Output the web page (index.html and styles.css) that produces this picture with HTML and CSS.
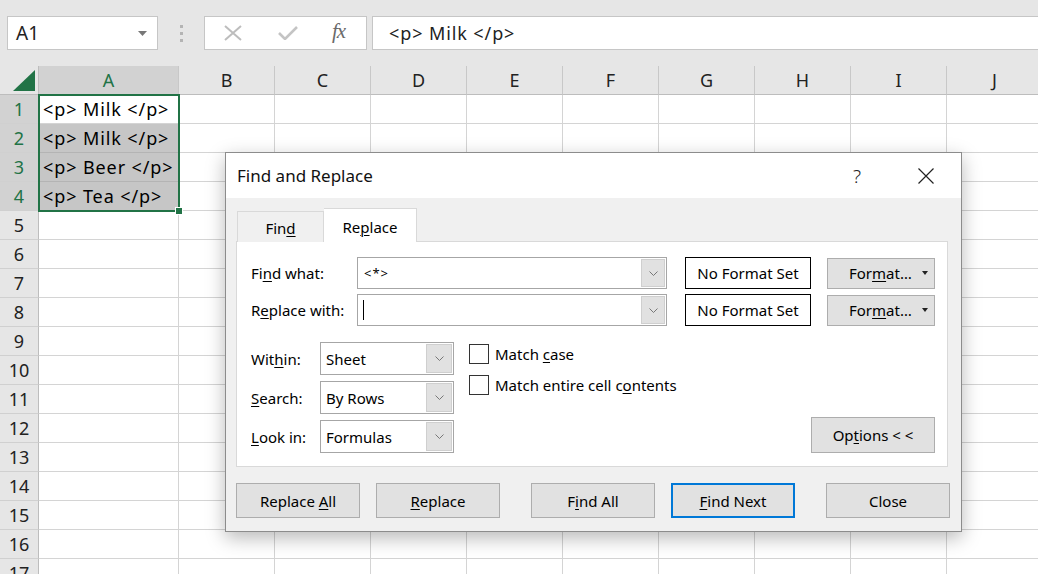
FILE: index.html
```html
<!DOCTYPE html>
<html>
<head>
<meta charset="utf-8">
<link rel="stylesheet" href="styles.css">
</head>
<body>
<div class="toolbar">
  <div class="namebox"><span>A1</span><svg width="9" height="5" viewBox="0 0 9 5"><path d="M0 0h9L4.5 5z" fill="#777"/></svg></div>
  <div class="grip"><i></i><i></i><i></i></div>
  <div class="fxbox">
    <svg class="fx-x" width="18" height="16" viewBox="0 0 18 16"><path d="M1 1l16 14M17 1L1 15" stroke="#bdbdbd" stroke-width="2" fill="none"/></svg>
    <svg class="fx-ok" width="20" height="14" viewBox="0 0 20 14"><path d="M1 7l6 6L19 1" stroke="#c4c4c4" stroke-width="2.6" fill="none"/></svg>
    <span class="fx-f">fx</span>
  </div>
  <div class="formula">&lt;p&gt; Milk &lt;/p&gt;</div>
</div>

<div class="sheet">
  <div class="row hdr">
    <div class="corner"><svg width="22" height="21" viewBox="0 0 22 21"><path d="M22 0V21H0z" fill="#217346"/></svg></div>
    <div class="ch a sel">A</div><div class="ch">B</div><div class="ch">C</div><div class="ch">D</div><div class="ch">E</div><div class="ch">F</div><div class="ch">G</div><div class="ch">H</div><div class="ch">I</div><div class="ch">J</div>
  </div>
  <div class="row"><div class="rh sel">1</div><div class="c a">&lt;p&gt; Milk &lt;/p&gt;</div><div class="c"></div><div class="c"></div><div class="c"></div><div class="c"></div><div class="c"></div><div class="c"></div><div class="c"></div><div class="c"></div><div class="c"></div></div>
  <div class="row"><div class="rh sel">2</div><div class="c a fill">&lt;p&gt; Milk &lt;/p&gt;</div><div class="c"></div><div class="c"></div><div class="c"></div><div class="c"></div><div class="c"></div><div class="c"></div><div class="c"></div><div class="c"></div><div class="c"></div></div>
  <div class="row"><div class="rh sel">3</div><div class="c a fill">&lt;p&gt; Beer &lt;/p&gt;</div><div class="c"></div><div class="c"></div><div class="c"></div><div class="c"></div><div class="c"></div><div class="c"></div><div class="c"></div><div class="c"></div><div class="c"></div></div>
  <div class="row"><div class="rh sel">4</div><div class="c a fill">&lt;p&gt; Tea &lt;/p&gt;</div><div class="c"></div><div class="c"></div><div class="c"></div><div class="c"></div><div class="c"></div><div class="c"></div><div class="c"></div><div class="c"></div><div class="c"></div></div>
  <div class="row"><div class="rh">5</div><div class="c a"></div><div class="c"></div><div class="c"></div><div class="c"></div><div class="c"></div><div class="c"></div><div class="c"></div><div class="c"></div><div class="c"></div><div class="c"></div></div>
  <div class="row"><div class="rh">6</div><div class="c a"></div><div class="c"></div><div class="c"></div><div class="c"></div><div class="c"></div><div class="c"></div><div class="c"></div><div class="c"></div><div class="c"></div><div class="c"></div></div>
  <div class="row"><div class="rh">7</div><div class="c a"></div><div class="c"></div><div class="c"></div><div class="c"></div><div class="c"></div><div class="c"></div><div class="c"></div><div class="c"></div><div class="c"></div><div class="c"></div></div>
  <div class="row"><div class="rh">8</div><div class="c a"></div><div class="c"></div><div class="c"></div><div class="c"></div><div class="c"></div><div class="c"></div><div class="c"></div><div class="c"></div><div class="c"></div><div class="c"></div></div>
  <div class="row"><div class="rh">9</div><div class="c a"></div><div class="c"></div><div class="c"></div><div class="c"></div><div class="c"></div><div class="c"></div><div class="c"></div><div class="c"></div><div class="c"></div><div class="c"></div></div>
  <div class="row"><div class="rh">10</div><div class="c a"></div><div class="c"></div><div class="c"></div><div class="c"></div><div class="c"></div><div class="c"></div><div class="c"></div><div class="c"></div><div class="c"></div><div class="c"></div></div>
  <div class="row"><div class="rh">11</div><div class="c a"></div><div class="c"></div><div class="c"></div><div class="c"></div><div class="c"></div><div class="c"></div><div class="c"></div><div class="c"></div><div class="c"></div><div class="c"></div></div>
  <div class="row"><div class="rh">12</div><div class="c a"></div><div class="c"></div><div class="c"></div><div class="c"></div><div class="c"></div><div class="c"></div><div class="c"></div><div class="c"></div><div class="c"></div><div class="c"></div></div>
  <div class="row"><div class="rh">13</div><div class="c a"></div><div class="c"></div><div class="c"></div><div class="c"></div><div class="c"></div><div class="c"></div><div class="c"></div><div class="c"></div><div class="c"></div><div class="c"></div></div>
  <div class="row"><div class="rh">14</div><div class="c a"></div><div class="c"></div><div class="c"></div><div class="c"></div><div class="c"></div><div class="c"></div><div class="c"></div><div class="c"></div><div class="c"></div><div class="c"></div></div>
  <div class="row"><div class="rh">15</div><div class="c a"></div><div class="c"></div><div class="c"></div><div class="c"></div><div class="c"></div><div class="c"></div><div class="c"></div><div class="c"></div><div class="c"></div><div class="c"></div></div>
  <div class="row"><div class="rh">16</div><div class="c a"></div><div class="c"></div><div class="c"></div><div class="c"></div><div class="c"></div><div class="c"></div><div class="c"></div><div class="c"></div><div class="c"></div><div class="c"></div></div>
  <div class="row"><div class="rh">17</div><div class="c a"></div><div class="c"></div><div class="c"></div><div class="c"></div><div class="c"></div><div class="c"></div><div class="c"></div><div class="c"></div><div class="c"></div><div class="c"></div></div>
</div>
<div class="selection"><div class="handle"></div></div>

<div class="dialog">
  <div class="titlebar">
    <span class="title">Find and Replace</span>
    <span class="help">?</span>
    <svg class="close-x" width="16" height="16" viewBox="0 0 16 16"><path d="M0.5 0.5l15 15M15.5 0.5l-15 15" stroke="#222" stroke-width="1.2" fill="none"/></svg>
  </div>
  <div class="dbody">
    <div class="tabs">
      <div class="tab">Fin<u>d</u></div>
      <div class="tab active">Re<u>p</u>lace</div>
    </div>
    <div class="panel">
      <div class="topgrid">
        <div class="lbl">Fi<u>n</u>d what:</div>
        <div class="combo wide"><span class="val find">&lt;*&gt;</span><span class="dd"><svg width="9" height="5" viewBox="0 0 9 5"><path d="M0.5 0.5l4 4 4-4" stroke="#777" fill="none"/></svg></span></div>
        <div class="nfs">No Format Set</div>
        <div class="btn fmt"><span>For<u>m</u>at&hellip;</span><svg width="6" height="4" viewBox="0 0 6 4"><path d="M0 0h6L3 4z" fill="#222"/></svg></div>
        <div class="lbl">R<u>e</u>place with:</div>
        <div class="combo wide"><span class="val"><span class="caret"></span></span><span class="dd"><svg width="9" height="5" viewBox="0 0 9 5"><path d="M0.5 0.5l4 4 4-4" stroke="#777" fill="none"/></svg></span></div>
        <div class="nfs">No Format Set</div>
        <div class="btn fmt"><span>For<u>m</u>at&hellip;</span><svg width="6" height="4" viewBox="0 0 6 4"><path d="M0 0h6L3 4z" fill="#222"/></svg></div>
      </div>
      <div class="lower">
        <div class="selgrid">
          <div class="lbl">Wit<u>h</u>in:</div>
          <div class="combo sm"><span class="val">Sheet</span><span class="dd"><svg width="9" height="5" viewBox="0 0 9 5"><path d="M0.5 0.5l4 4 4-4" stroke="#777" fill="none"/></svg></span></div>
          <div class="lbl"><u>S</u>earch:</div>
          <div class="combo sm"><span class="val">By Rows</span><span class="dd"><svg width="9" height="5" viewBox="0 0 9 5"><path d="M0.5 0.5l4 4 4-4" stroke="#777" fill="none"/></svg></span></div>
          <div class="lbl"><u>L</u>ook in:</div>
          <div class="combo sm"><span class="val">Formulas</span><span class="dd"><svg width="9" height="5" viewBox="0 0 9 5"><path d="M0.5 0.5l4 4 4-4" stroke="#777" fill="none"/></svg></span></div>
        </div>
        <div class="checks">
          <label class="chk"><span class="box"></span><span>Match <u>c</u>ase</span></label>
          <label class="chk"><span class="box"></span><span>Match entire cell c<u>o</u>ntents</span></label>
        </div>
        <div class="btn options"><span>Op<u>t</u>ions &lt; &lt;</span></div>
      </div>
    </div>
    <div class="actions">
      <div class="btn act"><span>Replace <u>A</u>ll</span></div>
      <div class="btn act g16"><span><u>R</u>eplace</span></div>
      <div class="btn act g31"><span>F<u>i</u>nd All</span></div>
      <div class="btn act g16 default"><span><u>F</u>ind Next</span></div>
      <div class="btn act g31"><span>Close</span></div>
    </div>
  </div>
</div>
</body>
</html>
```

FILE: styles.css
```css
body {
  margin: 0;
  width: 1038px;
  height: 574px;
  overflow: hidden;
  background: #fff;
  position: relative;
  font-family: "Noto Sans", "Open Sans", sans-serif;
  color: #000;
}

/* toolbar */
.toolbar {
  height: 66px;
  box-sizing: border-box;
  background: #e6e6e6;
  display: flex;
  align-items: flex-start;
  padding-top: 16px;
}
.namebox {
  margin-left: 7px;
  width: 151px;
  height: 34px;
  box-sizing: border-box;
  background: #fff;
  border: 1px solid #c6c6c6;
  display: flex;
  align-items: center;
  justify-content: space-between;
  padding: 0 10px 0 8px;
  font-size: 19px;
  color: #222;
}
.grip {
  width: 46px;
  height: 34px;
  display: flex;
  flex-direction: column;
  align-items: center;
  justify-content: center;
  gap: 4px;
}
.grip i {
  display: block;
  width: 3px;
  height: 3px;
  background: #b4b4b4;
}
.fxbox {
  width: 163px;
  height: 34px;
  box-sizing: border-box;
  background: #fff;
  border: 1px solid #c6c6c6;
  display: flex;
  align-items: center;
}
.fx-x { margin-left: 19px; }
.fx-ok { margin-left: 36px; }
.fx-f {
  margin-left: 34px;
  font-family: "Liberation Serif", serif;
  font-style: italic;
  font-size: 21px;
  color: #6a6a6a;
  letter-spacing: -1px;
  margin-top: -3px;
}
.formula {
  margin-left: 5px;
  flex: 1;
  height: 34px;
  box-sizing: border-box;
  background: #fff;
  border: 1px solid #c6c6c6;
  border-right: none;
  padding-left: 16px;
  font-size: 18px;
  letter-spacing: 0.9px;
  line-height: 32px;
  color: #222;
}

/* sheet */
.sheet { width: 1043px; }
.row {
  display: flex;
  height: 29px;
}
.corner, .rh {
  width: 39px;
  flex: none;
  box-sizing: border-box;
  background: #e6e6e6;
  border-right: 1px solid #bdbdbd;
}
.corner {
  border-bottom: 1px solid #bdbdbd;
  display: flex;
  align-items: flex-end;
  justify-content: flex-end;
  padding: 0 3px 3px 0;
}
.ch {
  width: 96px;
  flex: none;
  box-sizing: border-box;
  background: #e6e6e6;
  border-right: 1px solid #c8c8c8;
  border-bottom: 1px solid #bdbdbd;
  text-align: center;
  font-size: 18px;
  line-height: 29px;
  color: #222;
}
.ch.a { width: 140px; }
.ch.sel { background: #d2d2d2; color: #217346; }
.rh {
  border-bottom: 1px solid #d0d0d0;
  text-align: center;
  font-size: 18px;
  line-height: 28px;
  color: #222;
}
.rh.sel { background: #d2d2d2; color: #217346; }
.c {
  width: 96px;
  flex: none;
  box-sizing: border-box;
  border-right: 1px solid #d4d4d4;
  border-bottom: 1px solid #d4d4d4;
  font-size: 18px;
  letter-spacing: 0.9px;
  line-height: 28px;
  padding-left: 4px;
  white-space: nowrap;
  color: #000;
}
.c.a { width: 140px; }
.c.fill { background: #c6c6c6; border-bottom-color: #b4b4b4; }

.selection {
  position: absolute;
  left: 38px;
  top: 94px;
  width: 142px;
  height: 118px;
  box-sizing: border-box;
  border: 2px solid #217346;
}
.handle {
  position: absolute;
  right: -5px;
  bottom: -5px;
  width: 6px;
  height: 6px;
  background: #217346;
  border: 1px solid #fff;
}

/* dialog */
.dialog {
  position: absolute;
  left: 225px;
  top: 152px;
  width: 737px;
  height: 380px;
  box-sizing: border-box;
  border: 1px solid #8c8c8c;
  background: #f0f0f0;
  box-shadow: 0 6px 18px rgba(0, 0, 0, 0.28);
  font-size: 15px;
}
.titlebar {
  height: 45px;
  background: #fff;
  display: flex;
  align-items: center;
  padding: 0 27px 0 11px;
}
.title { font-size: 17px; color: #111; }
.help {
  margin-left: auto;
  font-size: 19px;
  color: #222;
  font-weight: 300;
}
.close-x { margin-left: 57px; }

.dbody { padding: 10px 0 0 10px; }
.tabs {
  display: flex;
  align-items: flex-end;
  margin-left: 1px;
  margin-bottom: -1px;
  position: relative;
  z-index: 1;
}
.tab {
  width: 87px;
  height: 31px;
  box-sizing: border-box;
  border: 1px solid #d9d9d9;
  border-bottom: none;
  background: #f0f0f0;
  text-align: center;
  line-height: 32px;
  font-size: 15px;
}
.tab.active {
  width: 93px;
  height: 34px;
  background: #fff;
  border-left: none;
  line-height: 36px;
}
.panel {
  width: 712px;
  height: 226px;
  box-sizing: border-box;
  background: #fff;
  border: 1px solid #d9d9d9;
  padding: 15px 12px 0 14px;
}
.topgrid {
  display: grid;
  grid-template-columns: 106px 328px 142px 108px;
  grid-template-rows: 32px 32px;
  row-gap: 5px;
  align-items: center;
}
.lbl { font-size: 15px; white-space: nowrap; }
.combo {
  height: 32px;
  box-sizing: border-box;
  border: 1px solid #a6a6a6;
  background: #fff;
  display: flex;
  align-items: stretch;
}
.combo.wide { width: 310px; }
.combo .val {
  flex: 1;
  padding-left: 5px;
  display: flex;
  align-items: center;
  font-size: 15px;
  white-space: nowrap;
}
.combo .val.find { font-size: 13px; padding-left: 6px; letter-spacing: 1px; }
.caret {
  display: block;
  width: 1px;
  height: 20px;
  background: #000;
}
.combo .dd {
  width: 24px;
  margin: 1px;
  box-sizing: border-box;
  background: #e1e1e1;
  border: 1px solid #cfcfcf;
  display: flex;
  align-items: center;
  justify-content: center;
}
.nfs {
  width: 126px;
  height: 32px;
  box-sizing: border-box;
  border: 1px solid #000;
  text-align: center;
  line-height: 30px;
  font-size: 15px;
  white-space: nowrap;
}
.btn {
  box-sizing: border-box;
  background: #e1e1e1;
  border: 1px solid #adadad;
  font-size: 15px;
  white-space: nowrap;
  display: flex;
  align-items: center;
  justify-content: center;
}
.btn.fmt {
  width: 108px;
  height: 31px;
  padding-left: 21px;
  justify-content: flex-start;
}
.btn.fmt svg { margin-left: 10px; }

.lower {
  display: flex;
  margin-top: 16px;
  align-items: flex-start;
}
.selgrid {
  display: grid;
  grid-template-columns: 69px 134px;
  grid-auto-rows: 33px;
  row-gap: 6px;
  align-items: center;
}
.combo.sm { height: 33px; width: 134px; }
.combo.sm .dd { width: 26px; }
.checks {
  margin-left: 15px;
  margin-top: 2px;
  display: flex;
  flex-direction: column;
  gap: 11px;
}
.chk {
  display: flex;
  align-items: center;
  height: 20px;
  font-size: 15px;
  white-space: nowrap;
}
.box {
  width: 20px;
  height: 20px;
  box-sizing: border-box;
  border: 1px solid #333;
  background: #fff;
  margin-right: 6px;
}
.btn.options {
  margin-left: auto;
  align-self: flex-end;
  width: 124px;
  height: 36px;
}

.actions {
  display: flex;
  margin-top: 16px;
}
.btn.act { width: 124px; height: 35px; }
.btn.g16 { margin-left: 16px; }
.btn.g31 { margin-left: 31px; }
.btn.default { border: 2px solid #0078d7; }
u { text-decoration-thickness: 1px; text-underline-offset: 2px; }
```
